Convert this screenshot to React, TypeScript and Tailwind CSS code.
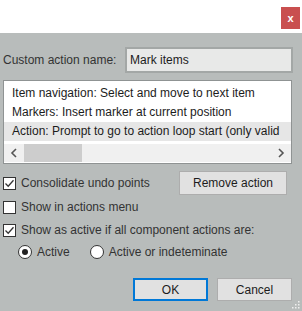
import { useState } from "react";

function Check({ checked }: { checked: boolean }) {
  return (
    <span className="flex h-[13px] w-[13px] shrink-0 items-center justify-center border border-[#333] bg-white">
      {checked && (
        <svg width="11" height="11" viewBox="0 0 11 11">
          <path d="M1.5 5.5 L4.2 8.2 L9.5 2.2" fill="none" stroke="#333" strokeWidth="1.3" />
        </svg>
      )}
    </span>
  );
}

function Radio({ on }: { on: boolean }) {
  return (
    <span className="flex h-[14px] w-[14px] shrink-0 items-center justify-center rounded-full border border-[#333] bg-white">
      {on && <span className="h-[6px] w-[6px] rounded-full bg-[#222]" />}
    </span>
  );
}

export default function App() {
  const [radio] = useState("active");
  const items = [
    "Item navigation: Select and move to next item",
    "Markers: Insert marker at current position",
    "Action: Prompt to go to action loop start (only valid",
  ];

  return (
    <div className="h-[311px] w-[302px] overflow-hidden bg-white text-[12px] text-[#1c1c1c] [font-family:'Liberation_Sans',Arial,sans-serif]">
      <div className="flex h-[33px] justify-end bg-white">
        <div className="mr-[2px] mt-[7px] flex h-[22px] w-[19px] items-center justify-center bg-[#c94f4f] text-[11px] font-bold leading-none text-white">
          x
        </div>
      </div>

      <div className="relative h-[278px] bg-[#b8bcbb] px-[3px]">
        <div className="flex items-center pt-[14px]">
          <span className="w-[122px] text-[#333]">Custom action name:</span>
          <div className="flex h-[26px] w-[168px] items-center border-2 border-[#a3a7a6] bg-[#e8e9e8] px-[3px]">
            Mark items
          </div>
        </div>

        <div className="mt-[7px] h-[84px] w-[289px] overflow-hidden border border-[#8f9393] bg-white">
          <div className="pt-[3px]">
            {items.map((t, i) => (
              <div
                key={t}
                className={
                  "h-[19px] whitespace-nowrap pl-[8px] leading-[19px] " +
                  (i === 2 ? "bg-[#e6e6e6]" : "")
                }
              >
                {t}
              </div>
            ))}
          </div>
          <div className="mt-[3px] flex h-[18px] items-center bg-[#f0f0f0]">
            <span className="flex w-[20px] justify-center">
              <svg width="8" height="10" viewBox="0 0 8 10">
                <path d="M6 1 L2 5 L6 9" fill="none" stroke="#555" strokeWidth="1.6" />
              </svg>
            </span>
            <span className="h-[18px] w-[58px] bg-[#cdcdcd]" />
            <span className="flex-1" />
            <span className="flex w-[20px] justify-center">
              <svg width="8" height="10" viewBox="0 0 8 10">
                <path d="M2 1 L6 5 L2 9" fill="none" stroke="#555" strokeWidth="1.6" />
              </svg>
            </span>
          </div>
        </div>

        <div className="mt-[7px] flex items-center justify-between pr-[12px]">
          <label className="flex items-center gap-[5px]">
            <Check checked />
            <span className="text-[#333]">Consolidate undo points</span>
          </label>
          <button className="h-[24px] w-[108px] border border-[#adadad] bg-[#e1e1e1] text-[12px]">
            Remove action
          </button>
        </div>

        <label className="mt-[3px] flex h-[18px] items-center gap-[5px]">
          <Check checked={false} />
          <span className="text-[#333]">Show in actions menu</span>
        </label>

        <label className="mt-[5px] flex h-[18px] items-center gap-[5px]">
          <Check checked />
          <span className="text-[#333]">Show as active if all component actions are:</span>
        </label>

        <div className="mt-[4px] flex h-[18px] items-center pl-[15px]">
          <label className="flex items-center gap-[5px]">
            <Radio on={radio === "active"} />
            <span className="text-[#333]">Active</span>
          </label>
          <label className="ml-[20px] flex items-center gap-[5px]">
            <Radio on={radio === "indet"} />
            <span className="text-[#333]">Active or indeteminate</span>
          </label>
        </div>

        <div className="mt-[17px] flex justify-end gap-[9px] pr-[7px]">
          <button className="h-[23px] w-[75px] border-2 border-[#0078d7] bg-[#e1e1e1] text-[12px]">
            OK
          </button>
          <button className="h-[23px] w-[75px] border border-[#adadad] bg-[#e1e1e1] text-[12px]">
            Cancel
          </button>
        </div>

        <svg className="absolute bottom-[2px] right-[2px]" width="8" height="8" viewBox="0 0 8 8">
          <rect x="6" y="0" width="1.5" height="1.5" fill="#eee" />
          <rect x="3" y="3" width="1.5" height="1.5" fill="#eee" />
          <rect x="6" y="3" width="1.5" height="1.5" fill="#eee" />
          <rect x="0" y="6" width="1.5" height="1.5" fill="#eee" />
          <rect x="3" y="6" width="1.5" height="1.5" fill="#eee" />
          <rect x="6" y="6" width="1.5" height="1.5" fill="#eee" />
        </svg>
      </div>
    </div>
  );
}
